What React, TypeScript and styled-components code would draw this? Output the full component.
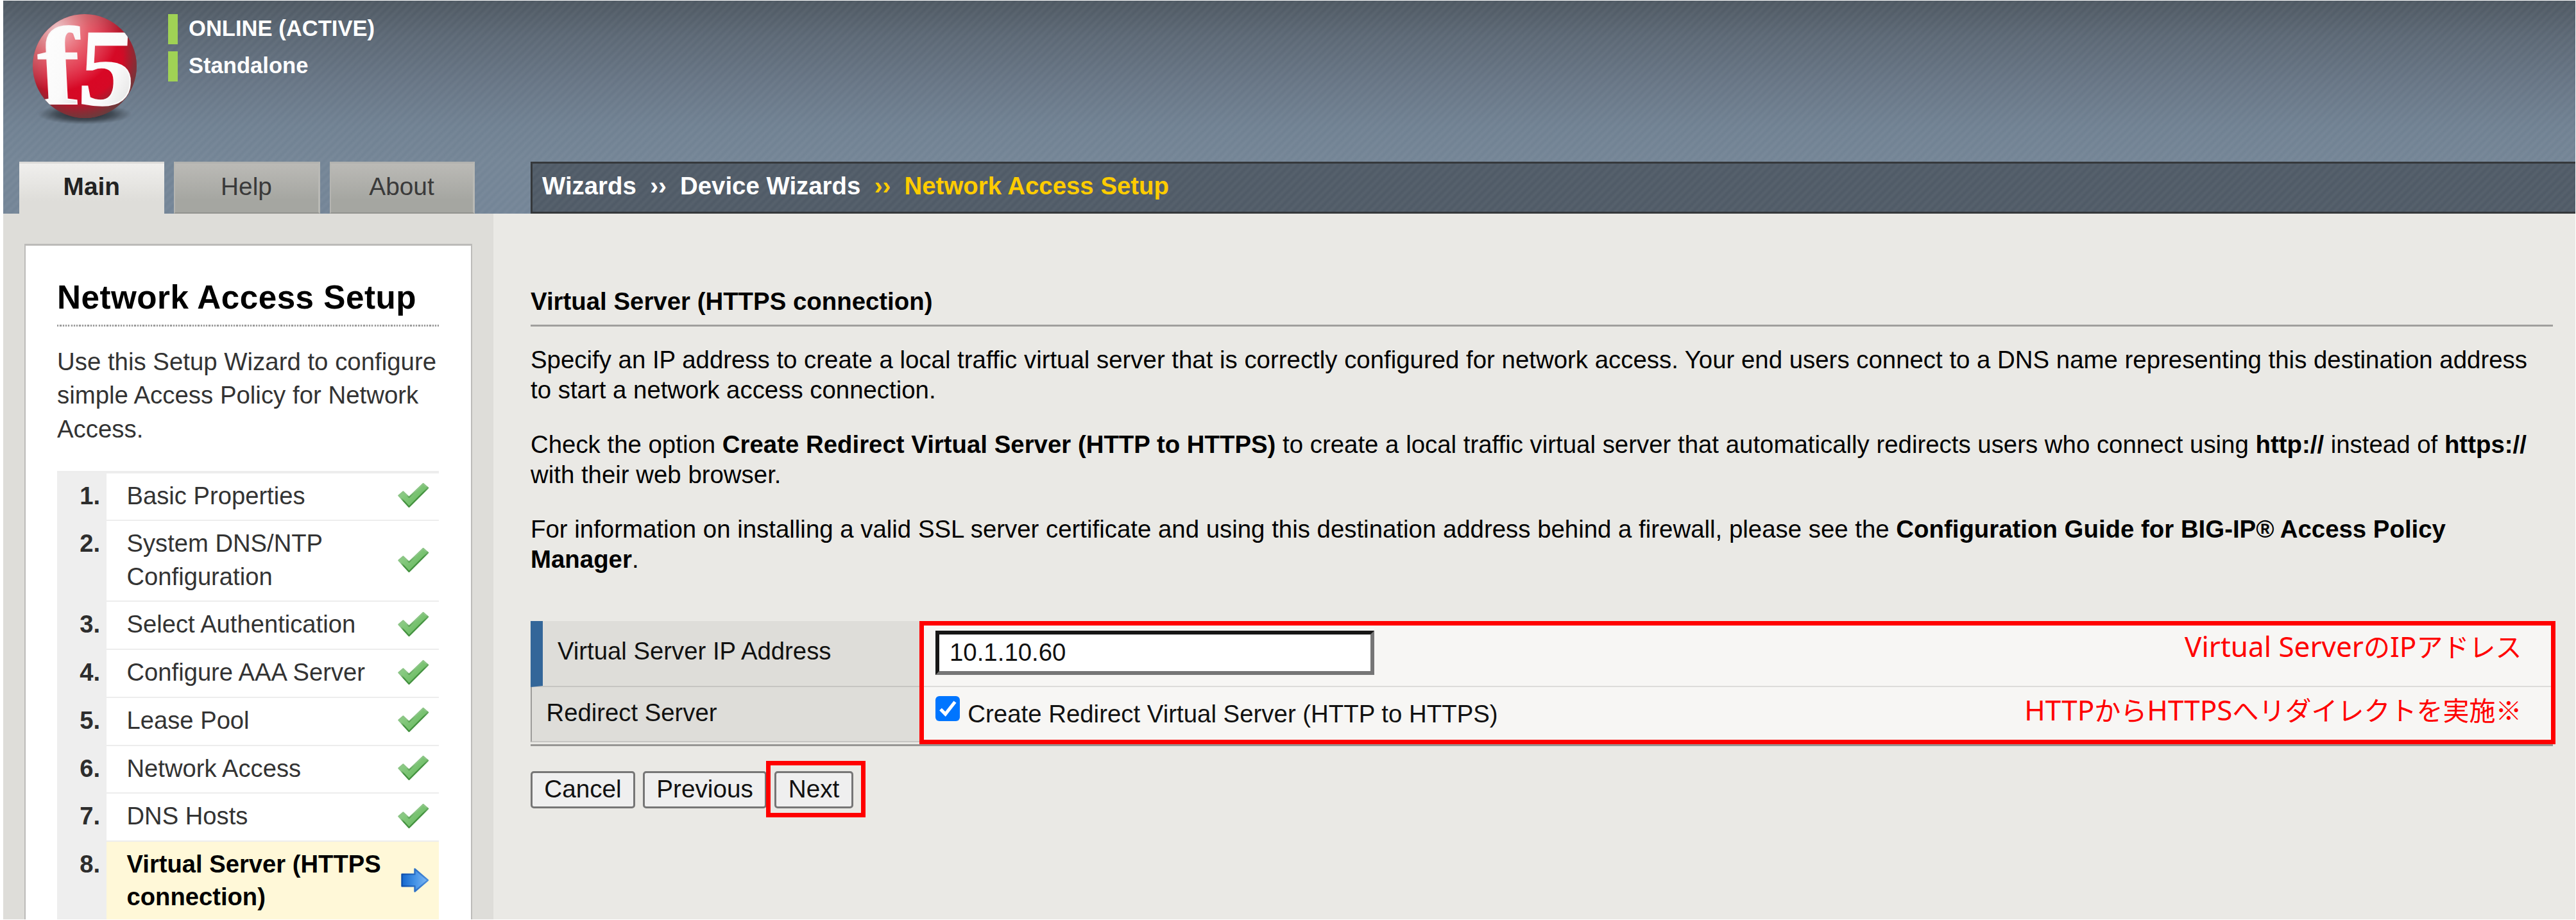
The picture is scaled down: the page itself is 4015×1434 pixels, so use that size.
import React from 'react';
import styled, { createGlobalStyle } from 'styled-components';

const GlobalStyle = createGlobalStyle`
  *, *::before, *::after { box-sizing: border-box; }
  html, body { margin: 0; background: #fff; }
  body { font-family: "Liberation Sans", Arial, sans-serif; font-size: 38.4px; color: #000; }
  h1, h2, p, ol, ul { margin: 0; padding: 0; }
  ol, ul { list-style: none; }
`;

const stripes =
  'repeating-linear-gradient(135deg, rgba(255,255,255,0) 0, rgba(255,255,255,0.034) 3.5px, rgba(255,255,255,0.034) 4.5px, rgba(255,255,255,0) 8px, rgba(255,255,255,0) 9px)';

const Page = styled.div`
  width: 4015px;
  height: 1434px;
  padding: 1px 1px 1px 5px;
  overflow: hidden;
  display: flex;
  flex-direction: column;
`;

/* ---------- header ---------- */

const Header = styled.header`
  flex: none;
  height: 332px;
  display: grid;
  grid-template-columns: 822px 1fr;
  grid-template-rows: 251px 81px;
  background: ${stripes},
    linear-gradient(#4f5963 0, #5c6875 55px, #687686 130px, #708192 195px, #748596 250px, #748597 332px);
`;

const Brand = styled.div`
  grid-column: 1 / -1;
  display: flex;
  align-items: flex-start;
  padding: 14px 0 0 35px;
`;

const LogoSvg = styled.svg`
  display: block;
  width: 190px;
  height: 190px;
`;

const StatusList = styled.ul`
  margin: 7px 0 0 32px;
  display: flex;
  flex-direction: column;
  gap: 10.5px;
`;

const StatusItem = styled.li`
  height: 47px;
  border-left: 15px solid #a0d255;
  padding-left: 17px;
  color: #fff;
  font-size: 34.6px;
  font-weight: 700;
  line-height: 45px;
  white-space: nowrap;
`;

const Tabs = styled.nav`
  display: flex;
  align-items: stretch;
  padding-left: 25px;
  gap: 15px;
`;

const Tab = styled.a<{ $width: number; $active?: boolean }>`
  width: ${(p) => p.$width}px;
  text-align: center;
  font-size: 38.8px;
  line-height: 72px;
  font-weight: ${(p) => (p.$active ? 700 : 400)};
  color: ${(p) => (p.$active ? '#222' : '#3a3a3a')};
  border-style: solid;
  border-width: ${(p) => (p.$active ? '3px 0 0 0' : '3px 3px 2px 2px')};
  border-color: ${(p) => (p.$active ? '#dbdad8' : '#b2b2af #b9b9b5 #92938f #b5b5b1')};
  background: ${(p) =>
    p.$active
      ? 'linear-gradient(#f0efed, #deddd9 75%)'
      : 'linear-gradient(#bbbab6, #a5a6a1 75%)'};
`;

const Crumbs = styled.div`
  display: flex;
  gap: 21.3px;
  padding-left: 15px;
  border: 3px solid #35383b;
  border-right: 0;
  background: ${stripes}, #505b67;
  color: #fff;
  font-weight: 700;
  line-height: 69px;
  white-space: nowrap;
`;

const Crumb = styled.span<{ $current?: boolean }>`
  color: ${(p) => (p.$current ? '#ffcc00' : '#fff')};
`;

/* ---------- sidebar ---------- */

const Body = styled.div`
  flex: 1;
  min-height: 0;
  display: flex;
`;

const Sidebar = styled.aside`
  flex: none;
  width: 764px;
  padding: 47px 33px 0;
  background: #deddd9;
  display: flex;
`;

const Panel = styled.section`
  flex: 1;
  background: #fff;
  border: 2px solid #bcbbb9;
  border-top-width: 3px;
  border-bottom: 0;
  padding: 51px 50px 0 49px;
  overflow: hidden;
`;

const PanelTitle = styled.h1`
  font-size: 51.2px;
  letter-spacing: 0.5px;
  line-height: 60px;
  font-weight: 700;
  white-space: nowrap;
`;

const DottedRule = styled.div`
  margin-top: 11.5px;
  height: 3px;
  background: repeating-linear-gradient(90deg, #9b9b9b 0, #9b9b9b 2.2px, #f0f0f0 2.2px, #f0f0f0 4.3px);
`;

const PanelText = styled.p`
  margin-top: 29px;
  line-height: 52.5px;
  color: #333;
  white-space: nowrap;
`;

const Steps = styled.ol`
  margin-top: 38.5px;
  border-top: 4px solid #ededed;
`;

const Step = styled.li`
  display: grid;
  grid-template-columns: 77px 1fr;
  line-height: 51.2px;
  font-size: 38.2px;
`;

const StepNumber = styled.div`
  background: #eeeeee;
  padding: 9px 10px 0 0;
  text-align: right;
  font-weight: 700;
  color: #2d2d2d;
`;

const StepBody = styled.div<{ $active?: boolean }>`
  display: flex;
  align-items: center;
  justify-content: space-between;
  padding: 9px 15px 12.6px 31.5px;
  border-bottom: 2px solid #ededed;
  background: ${(p) => (p.$active ? '#fff8d8' : '#fff')};
  color: ${(p) => (p.$active ? '#000' : '#333')};
  font-weight: ${(p) => (p.$active ? 700 : 400)};
  white-space: nowrap;
`;

const CheckSvg = styled.svg`
  width: 51px;
  height: 42px;
  margin-right: -1px;
  display: block;
`;

const ArrowSvg = styled.svg`
  width: 44px;
  height: 40px;
  display: block;
`;

/* ---------- main column ---------- */

const Main = styled.main`
  flex: 1;
  background: #eae9e5;
  padding: 113px 35px 0 58px;
`;

const SectionTitle = styled.h2`
  font-size: 38.4px;
  line-height: 47px;
  padding-bottom: 12.5px;
  border-bottom: 3px solid #a09f9d;
`;

const Paragraph = styled.p<{ $first?: boolean }>`
  margin-top: ${(p) => (p.$first ? 28.3 : 37.4)}px;
  line-height: 47.3px;
  white-space: nowrap;
`;

const Form = styled.div`
  position: relative;
  margin-top: 72.3px;
  padding-bottom: 3px;
  border-bottom: 3px solid #979694;
`;

const FormRow = styled.div<{ $height: number }>`
  display: grid;
  grid-template-columns: 606px 1fr;
  height: ${(p) => p.$height}px;
`;

const LabelCell = styled.div<{ $required?: boolean }>`
  background: #deddd9;
  border-bottom: 2px solid #c6c5c2;
  border-left: ${(p) => (p.$required ? '19px solid #336699' : '2px solid #9c9b99')};
  padding: ${(p) => (p.$required ? '23px 0 0 23px' : '16px 0 0 22.5px')};
  line-height: 47px;
  font-size: 38.3px;
  color: #111;
`;

const ValueCell = styled.div`
  display: flex;
  align-items: flex-start;
  padding: 0 48.5px 0 25px;
  background: #f7f6f4;
  border-bottom: 2px solid #dddcda;
`;

const AddressInput = styled.input`
  margin: 15px 0 0;
  width: 684px;
  height: 69px;
  border: 6.5px solid;
  border-color: #161616 #767676 #767676 #161616;
  border-radius: 0;
  padding: 0 0 0 16px;
  background: #fff;
  color: #111;
  font: 38.4px "Liberation Sans", Arial, sans-serif;
`;

const CheckLabel = styled.label`
  display: flex;
  align-items: flex-start;
  gap: 12.3px;
  padding-top: 14px;
  line-height: 47px;
  color: #111;
`;

const CheckBox = styled.span`
  width: 38px;
  height: 39px;
  border-radius: 6px;
  background: #0075ff;
`;

const CheckText = styled.span`
  padding-top: 4px;
`;

const Note = styled.div<{ $top: number }>`
  margin-left: auto;
  padding-top: ${(p) => p.$top}px;
  color: #ff0000;
  font: 41px/60px "Noto Sans CJK JP", sans-serif;
  white-space: nowrap;
`;

const Latin = styled.span`
  font-family: "Noto Sans", sans-serif;
  font-size: 44px;
`;

const FormHighlight = styled.div`
  position: absolute;
  top: 0;
  left: 605.5px;
  right: -4px;
  height: 192.5px;
  border: 7.5px solid #ff0000;
`;

const Actions = styled.div`
  display: flex;
  gap: 12px;
  margin-top: 39.5px;
`;

const Action = styled.button<{ $width: number }>`
  width: ${(p) => p.$width}px;
  height: 58px;
  padding: 0 0 2.5px;
  border: 3px solid #767676;
  border-radius: 5px;
  background: #efefef;
  color: #111;
  font: 38.7px "Liberation Sans", Arial, sans-serif;
`;

const Highlighted = styled.div`
  position: relative;
  display: flex;
`;

const ActionHighlight = styled.div`
  position: absolute;
  left: -13px;
  top: -16px;
  width: 155px;
  height: 88px;
  border: 7.5px solid #ff0000;
`;

const Logo = () => (
  <LogoSvg viewBox="0 0 190 190">
    <defs>
      <radialGradient id="ball" cx="0.5" cy="0.5" r="0.5">
        <stop offset="0" stopColor="#dc0524" />
        <stop offset="0.72" stopColor="#d40a26" />
        <stop offset="1" stopColor="#b01a2c" />
      </radialGradient>
      <radialGradient id="shine" cx="0.24" cy="0.14" r="0.6">
        <stop offset="0" stopColor="#fff" stopOpacity="0.75" />
        <stop offset="0.5" stopColor="#fbd0c8" stopOpacity="0.42" />
        <stop offset="1" stopColor="#fff" stopOpacity="0" />
      </radialGradient>
      <radialGradient id="shade" cx="0.4" cy="0.34" r="0.68">
        <stop offset="0.7" stopColor="#5c3c3c" stopOpacity="0" />
        <stop offset="1" stopColor="#5a4340" stopOpacity="0.8" />
      </radialGradient>
      <linearGradient id="letter" x1="0" y1="0" x2="1" y2="1">
        <stop offset="0" stopColor="#fff" />
        <stop offset="0.6" stopColor="#fafafa" />
        <stop offset="1" stopColor="#d9d9d9" />
      </linearGradient>
      <radialGradient id="drop">
        <stop offset="0" stopColor="#15191d" stopOpacity="0.95" />
        <stop offset="0.6" stopColor="#23292f" stopOpacity="0.6" />
        <stop offset="1" stopColor="#333a41" stopOpacity="0" />
      </radialGradient>
      <clipPath id="disc">
        <circle cx="92" cy="88" r="81" />
      </clipPath>
    </defs>
    <ellipse cx="92" cy="163" rx="74" ry="16" fill="url(#drop)" />
    <circle cx="92" cy="88" r="81" fill="url(#ball)" />
    <circle cx="92" cy="88" r="81" fill="url(#shine)" />
    <circle cx="92" cy="88" r="81" fill="url(#shade)" />
    <g
      clipPath="url(#disc)"
      fill="url(#letter)"
      stroke="#fafafa"
      strokeWidth="2"
      fontFamily="Liberation Serif, serif"
      fontWeight="700"
    >
      <text transform="translate(22 147) skewX(3) scale(1.14 1)" fontSize="173">f</text>
      <text transform="translate(80 148) skewX(-3) scale(1.03 1)" fontSize="170">5</text>
    </g>
  </LogoSvg>
);

const StepCheck = () => (
  <CheckSvg viewBox="0 0 51 42">
    <defs>
      <linearGradient id="tickFill" x1="0" y1="0" x2="1" y2="1">
        <stop offset="0.25" stopColor="#8ccc85" />
        <stop offset="0.6" stopColor="#74c06c" />
      </linearGradient>
      <linearGradient id="tickEdge" x1="0.3" y1="0.2" x2="0.65" y2="0.8">
        <stop offset="0.35" stopColor="#8cc586" />
        <stop offset="0.6" stopColor="#43913f" />
      </linearGradient>
    </defs>
    <path
      d="M2.5 21.5 L9.5 15.5 L18.5 24 L40.5 3 L48 9.5 L18.5 39 Z"
      fill="url(#tickFill)"
      stroke="url(#tickEdge)"
      strokeWidth="2.4"
      strokeLinejoin="round"
    />
  </CheckSvg>
);

const StepArrow = () => (
  <ArrowSvg viewBox="0 0 44 40">
    <defs>
      <linearGradient id="arrowFill" x1="0" y1="0" x2="1" y2="0">
        <stop offset="0" stopColor="#1467cd" />
        <stop offset="0.5" stopColor="#4593e6" />
        <stop offset="1" stopColor="#7fb8f3" />
      </linearGradient>
      <linearGradient id="arrowEdge" x1="0" y1="0" x2="1" y2="0">
        <stop offset="0" stopColor="#0d50ae" />
        <stop offset="1" stopColor="#4c8fdc" />
      </linearGradient>
    </defs>
    <path
      d="M1.5 10.8 H21.5 V2.5 L42 20 L21.5 37.5 V29.2 H1.5 Z"
      fill="url(#arrowFill)"
      stroke="url(#arrowEdge)"
      strokeWidth="2.4"
      strokeLinejoin="round"
    />
  </ArrowSvg>
);

const steps: { lines: string[]; active?: boolean }[] = [
  { lines: ['Basic Properties'] },
  { lines: ['System DNS/NTP', 'Configuration'] },
  { lines: ['Select Authentication'] },
  { lines: ['Configure AAA Server'] },
  { lines: ['Lease Pool'] },
  { lines: ['Network Access'] },
  { lines: ['DNS Hosts'] },
  { lines: ['Virtual Server (HTTPS', 'connection)'], active: true },
];

export default function App() {
  return (
    <>
      <GlobalStyle />
      <Page>
        <Header>
          <Brand>
            <Logo />
            <StatusList>
              <StatusItem>ONLINE (ACTIVE)</StatusItem>
              <StatusItem>Standalone</StatusItem>
            </StatusList>
          </Brand>
          <Tabs>
            <Tab $width={225.5} $active>Main</Tab>
            <Tab $width={228}>Help</Tab>
            <Tab $width={226}>About</Tab>
          </Tabs>
          <Crumbs>
            <Crumb>Wizards</Crumb>
            <Crumb>››</Crumb>
            <Crumb>Device Wizards</Crumb>
            <Crumb $current>››</Crumb>
            <Crumb $current>Network Access Setup</Crumb>
          </Crumbs>
        </Header>

        <Body>
          <Sidebar>
            <Panel>
              <PanelTitle>Network Access Setup</PanelTitle>
              <DottedRule />
              <PanelText>
                Use this Setup Wizard to configure
                <br />
                simple Access Policy for Network
                <br />
                Access.
              </PanelText>
              <Steps>
                {steps.map((step, i) => (
                  <Step key={i}>
                    <StepNumber>{i + 1}.</StepNumber>
                    <StepBody $active={step.active}>
                      <span>
                        {step.lines.map((line, n) => (
                          <React.Fragment key={line}>
                            {n > 0 && <br />}
                            {line}
                          </React.Fragment>
                        ))}
                      </span>
                      {step.active ? <StepArrow /> : <StepCheck />}
                    </StepBody>
                  </Step>
                ))}
              </Steps>
            </Panel>
          </Sidebar>

          <Main>
            <SectionTitle>Virtual Server (HTTPS connection)</SectionTitle>
            <Paragraph $first>
              Specify an IP address to create a local traffic virtual server that is correctly configured for
              network access. Your end users connect to a DNS name representing this destination address
              <br />
              to start a network access connection.
            </Paragraph>
            <Paragraph>
              Check the option <b>Create Redirect Virtual Server (HTTP to HTTPS)</b> to create a local traffic
              virtual server that automatically redirects users who connect using <b>http://</b> instead of{' '}
              <b>https://</b>
              <br />
              with their web browser.
            </Paragraph>
            <Paragraph>
              For information on installing a valid SSL server certificate and using this destination address
              behind a firewall, please see the <b>Configuration Guide for BIG-IP® Access Policy</b>
              <br />
              <b>Manager</b>.
            </Paragraph>

            <Form>
              <FormRow $height={103}>
                <LabelCell $required>Virtual Server IP Address</LabelCell>
                <ValueCell>
                  <AddressInput defaultValue="10.1.10.60" />
                  <Note $top={8}>
                    <Latin>Virtual Server</Latin>の<Latin>IP</Latin>アドレス
                  </Note>
                </ValueCell>
              </FormRow>
              <FormRow $height={86}>
                <LabelCell>Redirect Server</LabelCell>
                <ValueCell>
                  <CheckLabel>
                    <CheckBox>
                      <svg viewBox="0 0 38 39" width="38" height="39">
                        <path d="M8 20.5 L15.5 28 L30.5 9" fill="none" stroke="#fff" strokeWidth="5.2" />
                      </svg>
                    </CheckBox>
                    <CheckText>Create Redirect Virtual Server (HTTP to HTTPS)</CheckText>
                  </CheckLabel>
                  <Note $top={4}>
                    <Latin>HTTP</Latin>から<Latin>HTTPS</Latin>へリダイレクトを実施※
                  </Note>
                </ValueCell>
              </FormRow>
              <FormHighlight />
            </Form>

            <Actions>
              <Action $width={163}>Cancel</Action>
              <Action $width={193}>Previous</Action>
              <Highlighted>
                <Action $width={123}>Next</Action>
                <ActionHighlight />
              </Highlighted>
            </Actions>
          </Main>
        </Body>
      </Page>
    </>
  );
}
